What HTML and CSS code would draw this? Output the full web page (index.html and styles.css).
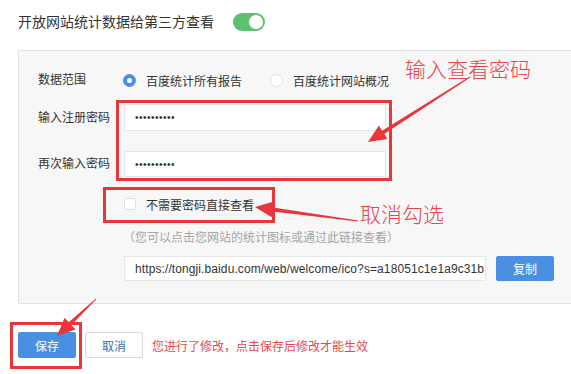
FILE: index.html
```html
<!DOCTYPE html>
<html lang="zh-CN">
<head>
<meta charset="utf-8">
<title>开放网站统计数据</title>
<link rel="stylesheet" href="styles.css">
</head>
<body>
<div class="page">
  <div class="top-row">
    <span class="top-label">开放网站统计数据给第三方查看</span>
    <span class="toggle"><span class="knob"></span></span>
  </div>

  <div class="panel">
    <div class="row row-range">
      <span class="label">数据范围</span>
      <div class="radios">
        <label class="radio-item"><span class="radio checked"></span><span>百度统计所有报告</span></label>
        <label class="radio-item"><span class="radio"></span><span>百度统计网站概况</span></label>
      </div>
    </div>
    <div class="row row-pass1">
      <span class="label">输入注册密码</span>
      <div class="input pass">••••••••••</div>
    </div>
    <div class="row row-pass2">
      <span class="label">再次输入密码</span>
      <div class="input pass">••••••••••</div>
    </div>
    <div class="row row-check">
      <span class="label"></span>
      <label class="check-item"><span class="checkbox"></span><span>不需要密码直接查看</span></label>
    </div>
    <div class="row row-hint">
      <span class="label"></span>
      <span class="hint">（您可以点击您网站的统计图标或通过此链接查看）</span>
    </div>
    <div class="row row-url">
      <span class="label"></span>
      <div class="input url"><span class="url-text">https://tongji.baidu.com/web/welcome/ico?s=a18051c1e1a9c31b</span></div>
      <button class="btn btn-primary btn-copy">复制</button>
    </div>
  </div>

  <div class="actions">
    <button class="btn btn-primary">保存</button>
    <button class="btn btn-default">取消</button>
    <span class="notice">您进行了修改，点击保存后修改才能生效</span>
  </div>

  <div class="mark mark-pass"></div>
  <div class="mark mark-check"></div>
  <div class="mark mark-save"></div>
  <span class="note note-pass">输入查看密码</span>
  <span class="note note-check">取消勾选</span>
  <svg class="arrows" width="571" height="374" viewBox="0 0 571 374">
    <polygon points="469.73,76.58 382.11,130.64 378.88,125.58 368,142 387.48,139.08 384.25,134.02 470.27,77.42"/>
    <polygon points="358.07,220.5 273.11,207.44 273.92,201.49 255,207 271.76,217.35 272.57,211.4 357.93,221.5"/>
    <polygon points="95.66,298.64 68.68,322.16 64.55,317.81 57,336 75.57,329.41 71.44,325.06 96.34,299.36"/>
  </svg>
</div>
</body>
</html>
```
FILE: styles.css
```css
* { box-sizing: border-box; }
html, body { margin: 0; padding: 0; background: #fff; }
body {
  font-family: "Liberation Sans", "Noto Sans CJK SC", sans-serif;
  font-size: 12px;
  color: #333;
  width: 571px;
  height: 374px;
  overflow: hidden;
}
.page { position: relative; width: 571px; height: 374px; }

.top-row {
  display: flex;
  align-items: center;
  padding: 13px 0 0 18px;
  height: 31px;
}
.top-label { font-size: 14px; line-height: 18px; color: #333; }
.toggle {
  position: relative;
  margin-left: 19px;
  width: 32px;
  height: 18px;
  border-radius: 9px;
  background: #5cc171;
}
.knob {
  position: absolute;
  right: 2px;
  top: 2px;
  width: 14px;
  height: 14px;
  border-radius: 50%;
  background: #fff;
}

.panel {
  margin: 19px 0 0 18px;
  border: 1px solid #e3e3e3;
  border-right: none;
  background: #f7f7f7;
  padding: 17px 0 22px 19px;
  display: flex;
  flex-direction: column;
}
.row { display: flex; align-items: center; }
.label { width: 86px; flex: none; color: #333; line-height: 16px; }
.row-range { height: 24px; }
.row-pass1 { margin-top: 12px; }
.row-pass2 { margin-top: 20px; }
.row-check { margin-top: 15px; height: 24px; }
.row-hint { margin-top: 10px; height: 20px; }
.row-url { margin-top: 10px; }

.radios { display: flex; align-items: center; gap: 28px; margin-left: -1px; }
.radio-item, .check-item { display: flex; align-items: center; gap: 10px; }
.radio {
  width: 13px; height: 13px; border-radius: 50%;
  background: #fff; border: 1px solid #e2e2e2;
  position: relative;
}
.radio.checked { background: #4a90e2; border-color: #4a90e2; }
.radio.checked::after {
  content: ""; position: absolute; left: 3px; top: 3px;
  width: 5px; height: 5px; border-radius: 50%; background: #fff;
}
.checkbox {
  width: 12px; height: 12px; border: 1px solid #e0e0e0;
  background: #fff; border-radius: 2px;
}

.input {
  background: #fff;
  border: 1px solid #e6e6e6;
  padding-left: 10px;
  display: flex;
  align-items: center;
  white-space: nowrap;
  overflow: hidden;
}
.pass { width: 262px; height: 27px; font-size: 10px; letter-spacing: 0.5px; color: #333; }
.row-pass2 .pass { height: 26px; }
.url { width: 362px; height: 25px; font-size: 12px; color: #333; }
.url-text { letter-spacing: 0.1px; }
.hint { color: #a5a5a5; margin-left: -1px; }

.btn {
  font-family: inherit;
  font-size: 12px;
  width: 58px;
  height: 26px;
  border-radius: 2px;
  padding: 0;
  cursor: pointer;
}
.btn-primary { background: #4a90e2; border: 1px solid #4a90e2; color: #fff; }
.btn-default { background: #fff; border: 1px solid #d9d9d9; color: #3c6bb0; }
.btn-copy { margin-left: 10px; height: 25px; }

.actions {
  display: flex;
  align-items: center;
  gap: 9px;
  margin: 28px 0 0 18px;
}
.notice { color: #e5494d; margin-left: 0; }

.mark { position: absolute; border: 3px solid #e8363b; }
.mark-pass { left: 116px; top: 100px; width: 276px; height: 81px; }
.mark-check { left: 103px; top: 187px; width: 172px; height: 36px; }
.mark-save { left: 10px; top: 322px; width: 72px; height: 47px; }

.note {
  position: absolute;
  color: #e6454b;
  font-size: 21px;
  line-height: 22px;
  font-weight: 300;
  white-space: nowrap;
}
.note-pass { left: 405px; top: 59px; }
.note-check { left: 360px; top: 204px; }

.arrows { position: absolute; left: 0; top: 0; pointer-events: none; }
.arrows polygon { fill: #e8363b; }
```
